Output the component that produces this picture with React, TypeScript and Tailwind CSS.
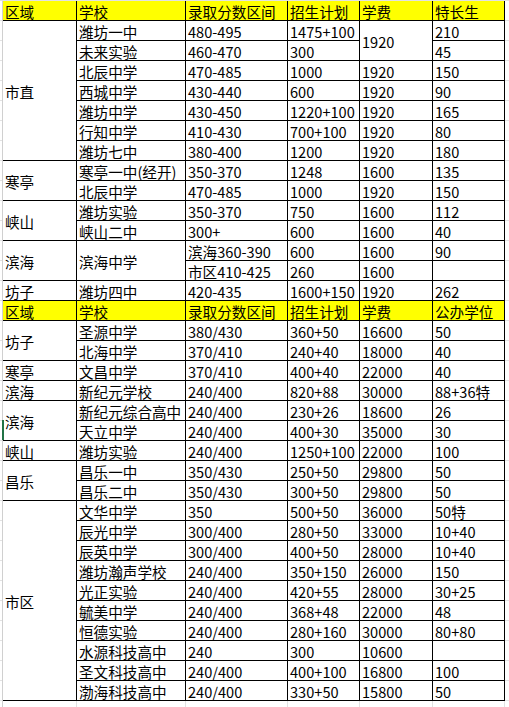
import React from "react";

type Cell = { t: string; rs?: 2 | 7 | 10; head?: boolean };

const H1 = ["区域", "学校", "录取分数区间", "招生计划", "学费", "特长生"];
const H2 = ["区域", "学校", "录取分数区间", "招生计划", "学费", "公办学位"];

const c = (t: string, rs?: 2 | 7 | 10): Cell => ({ t, rs });
const head = (names: string[]): Cell[] => names.map((t) => ({ t, head: true }));

// row-major order; spanning cells leave gaps that the grid fills by itself
const cells: Cell[] = [
  ...head(H1),
  c("市直", 7), c("潍坊一中"), c("480-495"), c("1475+100"), c("1920", 2), c("210"),
  c("未来实验"), c("460-470"), c("300"), c("45"),
  c("北辰中学"), c("470-485"), c("1000"), c("1920"), c("150"),
  c("西城中学"), c("430-440"), c("600"), c("1920"), c("90"),
  c("潍坊中学"), c("430-450"), c("1220+100"), c("1920"), c("165"),
  c("行知中学"), c("410-430"), c("700+100"), c("1920"), c("80"),
  c("潍坊七中"), c("380-400"), c("1200"), c("1920"), c("180"),
  c("寒亭", 2), c("寒亭一中(经开)"), c("350-370"), c("1248"), c("1600"), c("135"),
  c("北辰中学"), c("470-485"), c("1000"), c("1920"), c("150"),
  c("峡山", 2), c("潍坊实验"), c("350-370"), c("750"), c("1600"), c("112"),
  c("峡山二中"), c("300+"), c("600"), c("1600"), c("40"),
  c("滨海", 2), c("滨海中学", 2), c("滨海360-390"), c("600"), c("1600"), c("90"),
  c("市区410-425"), c("260"), c("1600"), c(""),
  c("坊子"), c("潍坊四中"), c("420-435"), c("1600+150"), c("1920"), c("262"),
  ...head(H2),
  c("坊子", 2), c("圣源中学"), c("380/430"), c("360+50"), c("16600"), c("50"),
  c("北海中学"), c("370/410"), c("240+40"), c("18000"), c("40"),
  c("寒亭"), c("文昌中学"), c("370/410"), c("400+40"), c("22000"), c("40"),
  c("滨海"), c("新纪元学校"), c("240/400"), c("820+88"), c("30000"), c("88+36特"),
  c("滨海", 2), c("新纪元综合高中"), c("240/400"), c("230+26"), c("18600"), c("26"),
  c("天立中学"), c("240/400"), c("400+30"), c("35000"), c("30"),
  c("峡山"), c("潍坊实验"), c("240/400"), c("1250+100"), c("22000"), c("100"),
  c("昌乐", 2), c("昌乐一中"), c("350/430"), c("250+50"), c("29800"), c("50"),
  c("昌乐二中"), c("350/430"), c("300+50"), c("29800"), c("50"),
  c("市区", 10), c("文华中学"), c("350"), c("500+50"), c("36000"), c("50特"),
  c("辰光中学"), c("300/400"), c("280+50"), c("33000"), c("10+40"),
  c("辰英中学"), c("300/400"), c("400+50"), c("28000"), c("10+40"),
  c("潍坊瀚声学校"), c("240/400"), c("350+150"), c("26000"), c("150"),
  c("光正实验"), c("240/400"), c("420+55"), c("28000"), c("30+25"),
  c("毓美中学"), c("240/400"), c("368+48"), c("22000"), c("48"),
  c("恒德实验"), c("240/400"), c("280+160"), c("30000"), c("80+80"),
  c("水源科技高中"), c("240"), c("300"), c("10600"), c(""),
  c("圣文科技高中"), c("240/400"), c("400+100"), c("16800"), c("100"),
  c("渤海科技高中"), c("240/400"), c("330+50"), c("15800"), c("50"),
];

const span = { 2: "row-span-2", 7: "row-span-7", 10: "row-span-10" } as const;
const cols = "grid-cols-[74px_109px_102px_72px_73px_72px]";

export default function App() {
  return (
    <div
      className="relative h-[707px] w-[509px] overflow-hidden bg-white bg-[repeating-linear-gradient(to_bottom,#e2e2e2_0,#e2e2e2_1px,transparent_1px,transparent_20px)] text-[14.6px] text-black"
      style={{ fontFamily: '"Noto Sans CJK SC", "Liberation Sans", sans-serif' }}
    >
      <div className="ml-[2px] mt-[1px] w-[503px] border-l border-[#d0d0d0]">
        <div className={`grid ${cols} auto-rows-[20px]`}>
          {cells.map((cell, i) => (
            <div
              key={i}
              className={
                "flex items-center overflow-hidden whitespace-nowrap border-b border-r border-black pl-[2px] pt-[1px] leading-[19px] " +
                (cell.head ? "bg-[#ffff00] " : "bg-white ") +
                (cell.rs ? span[cell.rs] : "")
              }
            >
              {cell.t}
            </div>
          ))}
        </div>
        <div className={`grid ${cols} h-[6px]`}>
          {[0, 1, 2, 3, 4, 5].map((k) => (
            <div key={k} className="border-r border-[#e2e2e2] bg-white" />
          ))}
        </div>
      </div>
      {/* excel's active-row marker */}
      <div className="absolute left-[2px] top-[420px] h-[20px] w-[2px] bg-[#217346]" />
    </div>
  );
}
